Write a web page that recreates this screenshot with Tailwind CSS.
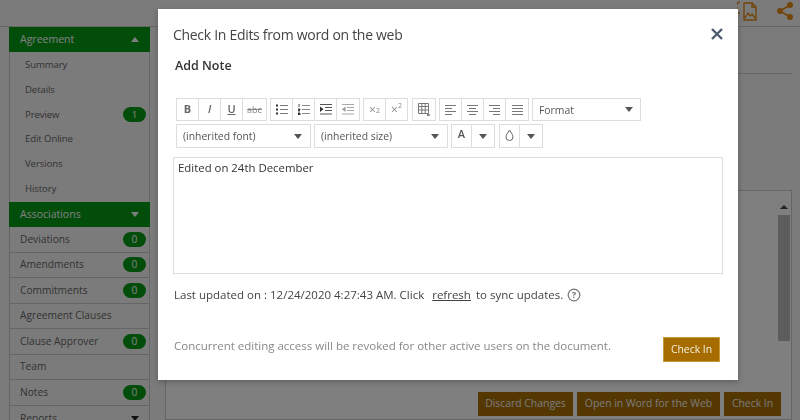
<!DOCTYPE html>
<html lang="en">
<head>
    <meta charset="UTF-8">
    <title>Check In Edits</title>
    <script src="https://cdn.jsdelivr.net/npm/@tailwindcss/browser@4"></script>
</head>
<body class="w-[800px] h-[420px] overflow-hidden bg-[#f7f7f7] font-['Open_Sans',sans-serif] text-[11px] text-[#666]">
    <!-- page under the overlay -->
    <div class="h-[420px] flex flex-col">
        <div class="h-[27px] flex justify-end items-start gap-[20px] pr-[7px] pt-[1px] shrink-0 border-b border-[#ccc]">
            <svg width="20" height="20" viewBox="0 0 20 20" fill="none" stroke="#e58a13" stroke-width="1.4"><path d="M7 2h8l4 4v13H7zM15 2v4h4M8 17l3-5 2 3 2-2 3 4"/><path d="M0 4q0-3 3-3M0 6v3M3 12H1"/></svg>
            <svg width="16" height="19" viewBox="0 0 16 19" fill="#e58a13" stroke="#e58a13" stroke-width="1.6"><circle cx="13" cy="4" r="2.200"/><circle cx="3" cy="10" r="2.200"/><circle cx="13" cy="16" r="2.200"/><path d="M13 4 3 10l10 6" fill="none"/></svg>
        </div>
        <div class="flex-1 flex pl-[9px] min-h-0">
            <div class="w-[141px] shrink-0">
                <div class="h-[25px] pl-[11px] pr-[11px] flex items-center justify-between bg-[#079a16] text-white text-[10.5px]">
                    <span>Agreement</span><span class="w-0 h-0 border-x-[4px] border-x-transparent border-b-[5px] border-b-white"></span>
                </div>
                <div class="flex flex-col pt-[1px] pb-[0.5px] border-x border-[#ccc] text-[9.6px] tracking-[-0.1px]">
                    <div class="h-[24.7px] pl-[15px] pr-[3px] flex items-center justify-between">Summary</div>
                    <div class="h-[24.7px] pl-[15px] pr-[3px] flex items-center justify-between">Details</div>
                    <div class="h-[24.7px] pl-[15px] pr-[3px] flex items-center justify-between">Preview<span class="w-[23px] h-[15px] rounded-full bg-[#079a16] text-white text-center leading-[15px]">1</span></div>
                    <div class="h-[24.7px] pl-[15px] pr-[3px] flex items-center justify-between">Edit Online</div>
                    <div class="h-[24.7px] pl-[15px] pr-[3px] flex items-center justify-between">Versions</div>
                    <div class="h-[24.7px] pl-[15px] pr-[3px] flex items-center justify-between">History</div>
                </div>
                <div class="h-[25.5px] pl-[11px] pr-[11px] flex items-center justify-between bg-[#079a16] text-white text-[10.5px]">
                    <span>Associations</span><span class="w-0 h-0 border-x-[4px] border-x-transparent border-t-[5px] border-t-white"></span>
                </div>
                <div class="border-x border-[#ccc] text-[10.2px]">
                    <div class="h-[25.5px] pl-[10px] pr-[3px] flex items-center justify-between border-b border-[#ccc]">Deviations<span class="w-[23px] h-[15px] rounded-full bg-[#079a16] text-white text-center leading-[15px]">0</span></div>
                    <div class="h-[25.5px] pl-[10px] pr-[3px] flex items-center justify-between border-b border-[#ccc]">Amendments<span class="w-[23px] h-[15px] rounded-full bg-[#079a16] text-white text-center leading-[15px]">0</span></div>
                    <div class="h-[25.5px] pl-[10px] pr-[3px] flex items-center justify-between border-b border-[#ccc]">Commitments<span class="w-[23px] h-[15px] rounded-full bg-[#079a16] text-white text-center leading-[15px]">0</span></div>
                    <div class="h-[25.5px] pl-[10px] pr-[3px] flex items-center justify-between border-b border-[#ccc]">Agreement Clauses</div>
                    <div class="h-[25.5px] pl-[10px] pr-[3px] flex items-center justify-between border-b border-[#ccc]">Clause Approver<span class="w-[23px] h-[15px] rounded-full bg-[#079a16] text-white text-center leading-[15px]">0</span></div>
                    <div class="h-[25.5px] pl-[10px] pr-[3px] flex items-center justify-between border-b border-[#ccc]">Team</div>
                    <div class="h-[25.5px] pl-[10px] pr-[3px] flex items-center justify-between border-b border-[#ccc]">Notes<span class="w-[23px] h-[15px] rounded-full bg-[#079a16] text-white text-center leading-[15px]">0</span></div>
                    <div class="h-[25.5px] pl-[10px] pr-[10px] flex items-center justify-between">Reports<span class="w-0 h-0 border-x-[4px] border-x-transparent border-t-[5px] border-t-[#222]"></span></div>
                </div>
            </div>
            <div class="flex-1 ml-[15px] mr-[8px] flex flex-col min-w-0">
                <div class="mt-[46px] border-t border-[#ccc]"></div>
                <div class="mt-[116px] flex-1 border border-[#ccc] bg-white flex flex-col">
                    <div class="flex-1 flex justify-end pr-[1px] pt-[14px]">
                        <div class="w-[12px] flex flex-col items-center">
                            <span class="w-0 h-0 border-x-[4px] border-x-transparent border-b-[4px] border-b-[#444]"></span>
                            <span class="mt-[6px] w-[12px] h-[126px] bg-[#bbb]"></span>
                        </div>
                    </div>
                    <div class="flex justify-end gap-[4px] pr-[10px] pb-[3px] text-[10.4px] text-[#f5f5f5]">
                        <button class="h-[24px] w-[95px] bg-[#ab6e02]">Discard Changes</button>
                        <button class="h-[24px] w-[143px] bg-[#ab6e02]">Open in Word for the Web</button>
                        <button class="h-[24px] w-[57px] bg-[#ab6e02]">Check In</button>
                    </div>
                </div>
            </div>
        </div>
    </div>

    <!-- overlay -->
    <div class="fixed inset-0 bg-black/50"></div>

    <!-- dialog -->
    <div class="absolute left-[158px] top-[9px] w-[580px] h-[371px] bg-white pl-[15px] pr-[15px] flex flex-col shadow-[0_2px_6px_rgba(0,0,0,0.25)]">
        <div class="flex items-center justify-between h-[50px] shrink-0">
            <h1 class="text-[14px] tracking-[-0.3px] text-[#444] pt-[1px]">Check In Edits from word on the web</h1>
            <svg width="12" height="12" viewBox="0 0 12 12" stroke="#4f5b70" stroke-width="2.4"><path d="M1 1l10 10M11 1 1 11"/></svg>
        </div>
        <div class="text-[12.5px] font-semibold text-[#333] pl-[2px] h-[30px] shrink-0 leading-[13px]">Add Note</div>
        <div class="flex flex-col gap-[3px] pl-[3px] mt-[9px] text-[#555] shrink-0">
            <div class="flex h-[23px]">
                <div class="flex border border-[#ddd] divide-x divide-[#ddd] text-[#666]">
                    <span class="w-[22px] flex items-center justify-center font-bold text-[11px]">B</span>
                    <span class="w-[22px] flex items-center justify-center italic font-semibold text-[11px]">I</span>
                    <span class="w-[22px] flex items-center justify-center underline font-semibold text-[11px]">U</span>
                    <span class="w-[23px] flex items-center justify-center line-through text-[9px] text-[#888]">abc</span>
                </div>
                <div class="ml-[3px] flex border border-[#ddd] divide-x divide-[#ddd]">
                    <span class="w-[22px] flex items-center justify-center"><svg width="12" height="11" viewBox="0 0 12 11" stroke="#777"><path d="M4 1.500h8M4 5.500h8M4 9.500h8"/><path stroke="#333" stroke-width="2" d="M0 1.500h2M0 5.500h2M0 9.500h2"/></svg></span>
                    <span class="w-[22px] flex items-center justify-center"><svg width="12" height="11" viewBox="0 0 12 11" stroke="#888"><path d="M4 1.500h8M4 5.500h8M4 9.500h8"/><path stroke="#444" d="M1 0v3M0 5h2v1H0v1h2M0 9h2v2H0"/></svg></span>
                    <span class="w-[22px] flex items-center justify-center"><svg width="12" height="11" viewBox="0 0 12 11" stroke="#555"><path d="M0 .5h12M5 3.500h7M5 6.500h7M0 10h12"/><path fill="#333" stroke="none" d="M0 2.500 3.500 5.200 0 8z"/></svg></span>
                    <span class="w-[22px] flex items-center justify-center opacity-50"><svg width="12" height="11" viewBox="0 0 12 11" stroke="#555"><path d="M0 .5h12M5 3.500h7M5 6.500h7M0 10h12"/><path fill="#333" stroke="none" d="M3.500 2.500 0 5.200 3.500 8z"/></svg></span>
                </div>
                <div class="ml-[3px] flex border border-[#ddd] divide-x divide-[#ddd] text-[#888]">
                    <span class="w-[22px] flex items-center justify-center text-[12px]">×<sub class="text-[7px]">2</sub></span>
                    <span class="w-[21px] flex items-center justify-center text-[12px]">×<sup class="text-[7px]">2</sup></span>
                </div>
                <div class="ml-[4px] flex border border-[#ddd]">
                    <span class="w-[22px] flex items-center justify-center"><svg width="13" height="13" viewBox="0 0 13 13" fill="none" stroke="#777"><path d="M.5.500h10v10H.5zM.5 3.500h10M.5 7h10M3.800.500v10M7.200.500v10"/><path stroke="#555" d="M10 11v2M9 12h3"/></svg></span>
                </div>
                <div class="ml-[3px] flex border border-[#ddd] divide-x divide-[#ddd]">
                    <span class="w-[22px] flex items-center justify-center"><svg width="11" height="10" viewBox="0 0 11 10" stroke="#777"><path d="M0 .5h11M0 3.500h7M0 6.500h11M0 9.500h7"/></svg></span>
                    <span class="w-[22px] flex items-center justify-center"><svg width="11" height="10" viewBox="0 0 11 10" stroke="#777"><path d="M0 .5h11M2 3.500h7M0 6.500h11M2 9.500h7"/></svg></span>
                    <span class="w-[22px] flex items-center justify-center"><svg width="11" height="10" viewBox="0 0 11 10" stroke="#777"><path d="M0 .5h11M4 3.500h7M0 6.500h11M4 9.500h7"/></svg></span>
                    <span class="w-[22px] flex items-center justify-center"><svg width="11" height="10" viewBox="0 0 11 10" stroke="#777"><path d="M0 .5h11M0 3.500h11M0 6.500h11M0 9.500h11"/></svg></span>
                </div>
                <div class="ml-[3px] w-[109px] border border-[#ddd] flex items-center justify-between pl-[6px] pr-[7px] text-[10.4px]"><span class="pt-[2px]">Format</span><span class="w-0 h-0 border-x-[4px] border-x-transparent border-t-[5px] border-t-[#555]"></span></div>
            </div>
            <div class="flex h-[24px] text-[10.4px]">
                <div class="w-[135px] border border-[#ddd] flex items-center justify-between pl-[6px] pr-[8px]"><span class="pt-[2px]">(inherited font)</span><span class="w-0 h-0 border-x-[4px] border-x-transparent border-t-[5px] border-t-[#555]"></span></div>
                <div class="ml-[3px] w-[134px] border border-[#ddd] flex items-center justify-between pl-[6px] pr-[8px]"><span class="pt-[2px]">(inherited size)</span><span class="w-0 h-0 border-x-[4px] border-x-transparent border-t-[5px] border-t-[#555]"></span></div>
                <div class="ml-[3px] flex border border-[#ddd] divide-x divide-[#ddd]">
                    <span class="w-[20px] flex items-center justify-center font-semibold text-[11px] pb-[3px]">A</span>
                    <span class="w-[22px] flex items-center justify-center"><span class="w-0 h-0 border-x-[4px] border-x-transparent border-t-[5px] border-t-[#555]"></span></span>
                </div>
                <div class="ml-[4px] flex border border-[#ddd] divide-x divide-[#ddd]">
                    <span class="w-[20px] flex items-center justify-center pb-[3px]"><svg width="9" height="12" viewBox="0 0 9 12" fill="none" stroke="#666"><path d="M4.500 1C3 4 1 5.500 1 8a3.500 3.500 0 0 0 7 0C8 5.500 6 4 4.500 1z"/></svg></span>
                    <span class="w-[22px] flex items-center justify-center"><span class="w-0 h-0 border-x-[4px] border-x-transparent border-t-[5px] border-t-[#555]"></span></span>
                </div>
            </div>
        </div>
        <div class="mt-[9px] h-[117px] border border-[#ddd] px-[4px] text-[11.4px] leading-[20px] text-[#333] shrink-0">Edited on 24th December</div>
        <div class="mt-[12px] pl-[1px] flex items-center text-[11.5px] text-[#444] shrink-0">
            <span>Last updated on : 12/24/2020 4:27:43 AM. Click</span>
            <a class="underline ml-[8px]">refresh</a>
            <span class="ml-[5px]">to sync updates.</span>
            <svg class="ml-[4px]" width="14" height="14" viewBox="0 0 14 14" fill="none" stroke="#777" stroke-width="1.200"><circle cx="7" cy="7" r="5.800"/><text x="7" y="10" font-size="8.500" font-weight="700" text-anchor="middle" fill="#666" stroke="none">?</text></svg>
        </div>
        <div class="mt-auto mb-[18px] pl-[1px] pr-[3px] flex items-start justify-between shrink-0">
            <span class="text-[11.5px] text-[#888]">Concurrent editing access will be revoked for other active users on the document.</span>
            <button class="h-[25px] w-[57px] bg-[#a66c00] border border-[#c79a3a] text-[#f5f0e0] text-[10.4px]">Check In</button>
        </div>
    </div>
</body>
</html>
